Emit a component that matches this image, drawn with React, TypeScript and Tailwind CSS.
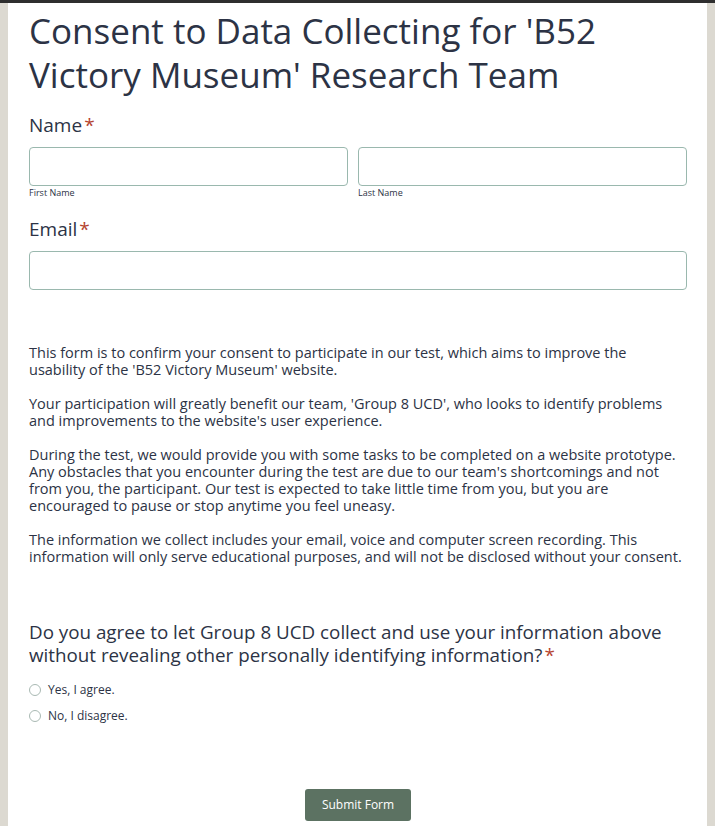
import React from 'react';

const font = "font-['Open_Sans',sans-serif]";

const Star = () => <span className="ml-0.5 leading-none text-[#b5432f]">*</span>;

export default function App() {
  return (
    <div className={`min-h-[826px] bg-[#dcd9d1] ${font} text-[#2c3345]`}>
      <div className="h-[3px] bg-[#2e2e2e]" />
      <div className="mx-[8px] bg-white pl-[21px] pr-[20px] pb-[5px] min-h-[823px]">
        {/* Header */}
        <h1 className="pt-[6px] text-[35px] leading-[44px] font-normal">
          Consent to Data Collecting for 'B52 Victory Museum' Research Team
        </h1>

        {/* Name */}
        <div className="mt-[16px]">
          <label className="text-[19px] leading-[24px]">Name<Star /></label>
          <div className="mt-[9px] flex gap-[10px]">
            <div className="w-[319px]">
              <input className="w-full h-[39px] rounded-[4px] border border-[#9ab8ae] bg-white" />
              <div className="text-[9px] leading-[12px] mt-[1px]">First Name</div>
            </div>
            <div className="flex-1">
              <input className="w-full h-[39px] rounded-[4px] border border-[#9ab8ae] bg-white" />
              <div className="text-[9px] leading-[12px] mt-[1px]">Last Name</div>
            </div>
          </div>
        </div>

        {/* Email */}
        <div className="mt-[18px]">
          <label className="text-[19px] leading-[24px]">Email<Star /></label>
          <input className="mt-[9px] block w-full h-[39px] rounded-[4px] border border-[#9ab8ae] bg-white" />
        </div>

        {/* Consent text */}
        <div className="mt-[54px] pr-[2px] text-[14.5px] leading-[17px] space-y-[17px]">
          <p>
            This form is to confirm your consent to participate in our test, which aims to improve the usability of the 'B52 Victory Museum' website.
          </p>
          <p>
            Your participation will greatly benefit our team, 'Group 8 UCD', who looks to identify problems and improvements to the website's user experience.
          </p>
          <p>
            During the test, we would provide you with some tasks to be completed on a website prototype. Any obstacles that you encounter during the test are due to our team's shortcomings and not from you, the participant. Our test is expected to take little time from you, but you are encouraged to pause or stop anytime you feel uneasy.
          </p>
          <p>
            The information we collect includes your email, voice and computer screen recording. This information will only serve educational purposes, and will not be disclosed without your consent.
          </p>
        </div>

        {/* Question */}
        <div className="mt-[56px]">
          <div className="text-[18.8px] leading-[23px]">
            Do you agree to let Group 8 UCD collect and use your information above without revealing other personally identifying information?<Star />
          </div>
          <div className="mt-[15px] space-y-[11px] text-[12px] leading-[15px]">
            <label className="flex items-center gap-[7px]">
              <span className="h-[12px] w-[12px] rounded-full border border-[#a9b9b3] bg-white" />
              Yes, I agree.
            </label>
            <label className="flex items-center gap-[7px]">
              <span className="h-[12px] w-[12px] rounded-full border border-[#a9b9b3] bg-white" />
              No, I disagree.
            </label>
          </div>
        </div>

        {/* Submit */}
        <div className="mt-[66px] flex justify-center">
          <button className="h-[32px] w-[106px] rounded-[3px] bg-[#5c7262] text-[12px] text-white">
            Submit Form
          </button>
        </div>
      </div>
    </div>
  );
}
